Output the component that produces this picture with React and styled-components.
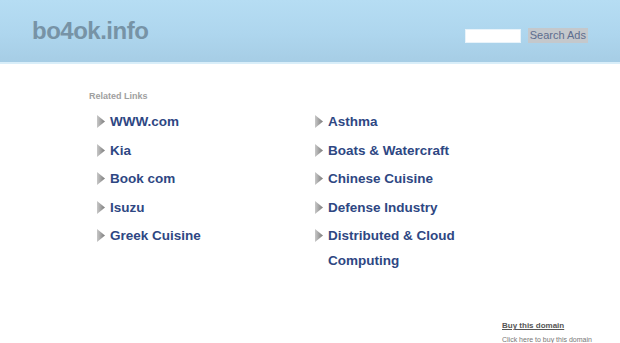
import React from 'react'
import styled, { createGlobalStyle } from 'styled-components'

const leftLinks = ['WWW.com', 'Kia', 'Book com', 'Isuzu', 'Greek Cuisine']
const rightLinks = ['Asthma', 'Boats & Watercraft', 'Chinese Cuisine', 'Defense Industry', 'Distributed & Cloud Computing']

const GlobalStyle = createGlobalStyle`
  html, body {
    margin: 0;
    padding: 0;
    background: #ffffff;
    font-family: "Liberation Sans", Arial, sans-serif;
  }
`

const Arrow = () => (
  <ArrowSvg width="8" height="13" viewBox="0 0 8 13">
    <defs>
      <linearGradient id="arrowGrad" x1="0" y1="0" x2="1" y2="0">
        <stop offset="0" stopColor="#c8c8c8" />
        <stop offset="1" stopColor="#7a7a7a" />
      </linearGradient>
    </defs>
    <polygon points="0,0 8,6.5 0,13" fill="url(#arrowGrad)" />
  </ArrowSvg>
)

const LinkColumn = ({ items }) => (
  <Column>
    {items.map(item => (
      <LinkRow key={item}>
        <Arrow />
        <LinkText href="#">{item}</LinkText>
      </LinkRow>
    ))}
  </Column>
)

export default function App() {
  return (
    <Page>
      <GlobalStyle />
      <Header>
        <Logo>bo4ok.info</Logo>
        <SearchForm>
          <SearchInput type="text" />
          <SearchButton type="button">Search Ads</SearchButton>
        </SearchForm>
      </Header>
      <Content>
        <SectionTitle>Related Links</SectionTitle>
        <Columns>
          <LinkColumn items={leftLinks} />
          <LinkColumn items={rightLinks} />
        </Columns>
      </Content>
      <Footer>
        <BuyBox>
          <BuyLink href="#">Buy this domain</BuyLink>
          <BuyNote>Click here to buy this domain</BuyNote>
        </BuyBox>
      </Footer>
    </Page>
  )
}

const Page = styled.div`
  width: 620px;
  height: 343px;
  overflow: hidden;
  display: flex;
  flex-direction: column;
`

const Header = styled.div`
  height: 62px;
  flex-shrink: 0;
  display: flex;
  align-items: center;
  justify-content: space-between;
  padding: 0 32px 0 32px;
  background: linear-gradient(to bottom, #b6ddf3 0%, #aed6ee 55%, #a6cde5 100%);
  border-bottom: 2px solid #d9eef9;
`

const Logo = styled.div`
  font-size: 24px;
  font-weight: bold;
  color: #7793a6;
  letter-spacing: -0.5px;
  margin-top: -1px;
`

const SearchForm = styled.div`
  display: flex;
  align-items: center;
  gap: 7px;
  margin-top: 9px;
`

const SearchInput = styled.input`
  width: 54px;
  height: 12px;
  padding: 0;
  border: 1px solid #e8f3fa;
  background: #ffffff;
  outline: none;
`

const SearchButton = styled.button`
  height: 15px;
  padding: 0 2px;
  border: none;
  background: #c4c8cc;
  color: #5d6d8e;
  font-family: "Liberation Sans", Arial, sans-serif;
  font-size: 11px;
  line-height: 15px;
`

const Content = styled.div`
  padding: 26px 0 0 89px;
`

const SectionTitle = styled.div`
  font-size: 9px;
  font-weight: bold;
  color: #a0a0a0;
  line-height: 12px;
  margin-bottom: 7px;
`

const Columns = styled.div`
  display: grid;
  grid-template-columns: 218px 200px;
  padding-left: 8px;
`

const Column = styled.div`
  display: flex;
  flex-direction: column;
`

const LinkRow = styled.div`
  display: flex;
  align-items: flex-start;
  gap: 5px;
  padding-bottom: 3.6px;
`

const ArrowSvg = styled.svg`
  flex-shrink: 0;
  margin-top: 6px;
`

const LinkText = styled.a`
  max-width: 160px;
  font-size: 13.5px;
  font-weight: bold;
  line-height: 25px;
  color: #2e4783;
  text-decoration: none;
`

const Footer = styled.div`
  margin-top: auto;
  display: flex;
  justify-content: flex-end;
`

const BuyBox = styled.div`
  width: 118px;
  display: flex;
  flex-direction: column;
  gap: 6px;
  margin-bottom: -1px;
`

const BuyLink = styled.a`
  font-size: 8px;
  font-weight: bold;
  color: #555555;
  text-decoration: underline;
`

const BuyNote = styled.div`
  font-size: 7px;
  line-height: 8px;
  color: #777777;
`
